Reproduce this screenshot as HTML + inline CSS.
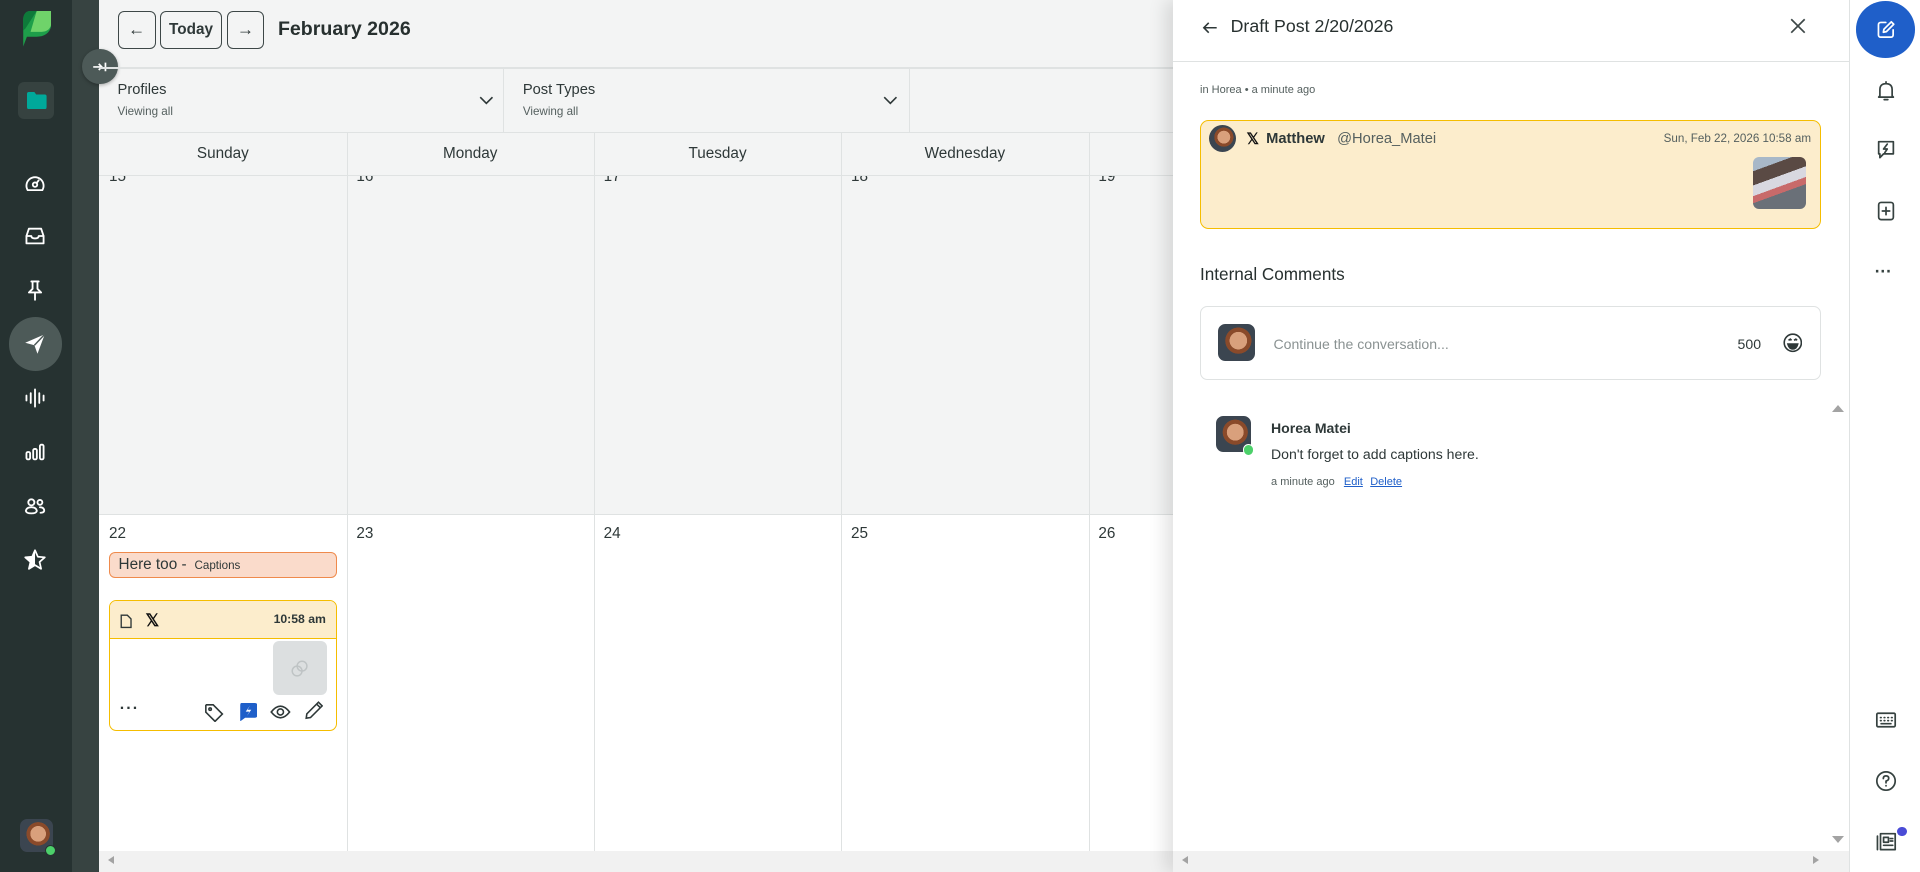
<!DOCTYPE html>
<html><head><meta charset="utf-8">
<style>
html{zoom:1.22449}
*{box-sizing:border-box;margin:0;padding:0}
body{width:1568px;height:712px;overflow:hidden;position:relative;font-family:"Liberation Sans",sans-serif;color:#2e3838;background:#f3f4f4}
.a{position:absolute}
.ic{position:absolute;width:18px;height:18px;fill:none;stroke:#fff;stroke-width:1.5;stroke-linecap:round;stroke-linejoin:round}
.btn{position:absolute;top:9px;height:31px;border:1px solid #3d4747;border-radius:5px;display:flex;align-items:center;justify-content:center;font-size:12.5px;font-weight:bold;color:#2e3838}
.col{position:absolute;top:108px;bottom:17px;border-left:1px solid #dfe2e2}
.day{position:absolute;top:108px;height:35px;line-height:36px;text-align:center;font-size:12.5px}
.num{position:absolute;font-size:12.5px}
.ri{position:absolute;left:1531px;width:18px;height:18px;fill:none;stroke:#364240;stroke-width:1.4;stroke-linecap:round;stroke-linejoin:round}
.av{position:absolute;border-radius:6px;background:radial-gradient(circle at 55% 45%,#d9a07c 0 30%,#8a4a2a 31% 45%,#3b4550 46% 100%)}
</style></head><body>
<!-- left sidebar -->
<div class="a" style="left:0;top:0;width:59px;height:712px;background:#263231"></div>
<div class="a" style="left:59px;top:0;width:22px;height:712px;background:#374341"></div>
<svg class="a" style="left:18px;top:9px" width="24" height="30" viewBox="0 0 24 30"><path d="M7 0H24V10C24 17 19 21 12 21H4L1 29V7C1 3 3 0 7 0Z" fill="#1e9e4a"/><path d="M12 0H24V9C24 14 21 17 16 17H7Z" fill="#6fd36a"/><path d="M1 7C1 3 3 0 7 0H12L3 14L1 16Z" fill="#0e7a3a"/></svg>
<div class="a" style="left:15px;top:67px;width:29px;height:30px;background:#364240;border-radius:5px"></div>
<svg class="a" style="left:22px;top:75px" width="16" height="14" viewBox="0 0 16 14"><path d="M0 1.5Q0 0 1.5 0H6L7.5 2H14.5Q16 2 16 3.5V12.5Q16 14 14.5 14H1.5Q0 14 0 12.5Z" fill="#00a99a"/></svg>
<svg class="ic" style="left:20px;top:141px" viewBox="0 0 18 18"><path d="M3 14A7 7 0 1 1 15 14Z"/><circle cx="9" cy="9.5" r="1.8"/><path d="M10.3 8.2L12 6"/></svg>
<svg class="ic" style="left:20px;top:184px" viewBox="0 0 18 18"><path d="M2 9L4 3H14L16 9V15H2Z"/><path d="M2 9H6Q6 11 9 11Q12 11 12 9H16"/></svg>
<svg class="ic" style="left:20px;top:228px" viewBox="0 0 18 18"><path d="M6 2H12M7 2V8L4 11H14L11 8V2M9 11V17"/></svg>
<div class="a" style="left:7px;top:259px;width:44px;height:44px;border-radius:50%;background:#4d5a58"></div>
<svg class="a" style="left:20px;top:272px" width="18" height="18" viewBox="0 0 18 18"><path d="M1 8L17 1L11 17L8.5 10Z" fill="#fff"/><path d="M8.5 10L17 1" stroke="#4d5a58" stroke-width="1.2"/></svg>
<svg class="ic" style="left:20px;top:316px" viewBox="0 0 18 18"><path d="M2 7V11M5.5 5V13M9 2V16M12.5 5V13M16 7V11"/></svg>
<svg class="ic" style="left:20px;top:360px" viewBox="0 0 18 18"><rect x="2" y="9" width="3" height="6" rx="1.2"/><rect x="7.5" y="6.5" width="3" height="8.5" rx="1.2"/><rect x="13" y="3" width="3" height="12" rx="1.2"/></svg>
<svg class="ic" style="left:20px;top:404px" viewBox="0 0 18 18"><circle cx="6" cy="6" r="2.5"/><circle cx="13" cy="6" r="2"/><path d="M1.5 13Q2 10 6 10Q10 10 10.5 13Q10 15 6 15Q2 15 1.5 13Z"/><path d="M13 10Q16.5 10 16.5 13Q16 14.5 13.5 14.5"/></svg>
<svg class="a" style="left:20px;top:448px" width="18" height="18" viewBox="0 0 18 18"><path d="M9 1L11.3 6.3L17 6.8L12.7 10.6L14 16.2L9 13.2L4 16.2L5.3 10.6L1 6.8L6.7 6.3Z" fill="none" stroke="#fff" stroke-width="1.4" stroke-linejoin="round"/><path d="M9 1L9 13.2L4 16.2L5.3 10.6L1 6.8L6.7 6.3Z" fill="#fff"/></svg>
<div class="av" style="left:16px;top:669px;width:27px;height:27px"></div>
<div class="a" style="left:37px;top:690px;width:9px;height:9px;border-radius:50%;background:#4cd06a;border:1.5px solid #263231"></div>
<!-- collapse button -->
<div class="a" style="left:67px;top:40px;width:29px;height:29px;border-radius:50%;background:#4d5a58;box-shadow:0 1px 3px rgba(0,0,0,.3)"></div>
<svg class="a" style="left:75px;top:48px" width="13" height="13" viewBox="0 0 13 13" fill="none" stroke="#fff" stroke-width="1.4"><path d="M1 6.5H8M5.5 4L8 6.5L5.5 9M11 3V10"/></svg>

<!-- main header -->
<div class="btn" style="left:96px;width:31px"><span style="font-weight:normal;font-size:14px">←</span></div>
<div class="btn" style="left:131px;width:50px">Today</div>
<div class="btn" style="left:185px;width:31px"><span style="font-weight:normal;font-size:14px">→</span></div>
<div class="a" style="left:227px;top:15px;font-size:16px;font-weight:bold;color:#27302f">February 2026</div>
<div class="a" style="left:81px;top:55px;width:877px;height:1px;background:#dfe2e2"></div>
<div class="a" style="left:96px;top:67px;font-size:12px">Profiles</div>
<div class="a" style="left:96px;top:86px;font-size:9.5px;color:#55605f">Viewing all</div>
<svg class="a" style="left:391px;top:78px" width="12" height="8" fill="none" stroke="#2e3838" stroke-width="1.3"><path d="M1 1L6 6L11 1"/></svg>
<div class="a" style="left:411px;top:56px;width:1px;height:52px;background:#dfe2e2"></div>
<div class="a" style="left:427px;top:67px;font-size:12px">Post Types</div>
<div class="a" style="left:427px;top:86px;font-size:9.5px;color:#55605f">Viewing all</div>
<svg class="a" style="left:721px;top:78px" width="12" height="8" fill="none" stroke="#2e3838" stroke-width="1.3"><path d="M1 1L6 6L11 1"/></svg>
<div class="a" style="left:742px;top:56px;width:1px;height:52px;background:#dfe2e2"></div>
<div class="a" style="left:81px;top:108px;width:877px;height:1px;background:#dfe2e2"></div>
<div class="a" style="left:81px;top:143px;width:877px;height:1px;background:#dfe2e2"></div>
<!-- week 2 white -->
<div class="a" style="left:81px;top:420px;width:877px;height:275px;background:#fff;border-top:1px solid #dfe2e2"></div>
<div class="col" style="left:283px"></div><div class="col" style="left:485px"></div><div class="col" style="left:687px"></div><div class="col" style="left:889px"></div>
<div class="day" style="left:81px;width:202px">Sunday</div>
<div class="day" style="left:283px;width:202px">Monday</div>
<div class="day" style="left:485px;width:202px">Tuesday</div>
<div class="day" style="left:687px;width:202px">Wednesday</div>
<div style="position:absolute;left:81px;top:144px;width:877px;height:8px;overflow:hidden">
<div class="num" style="left:8px;top:-7px">15</div><div class="num" style="left:210px;top:-7px">16</div><div class="num" style="left:412px;top:-7px">17</div><div class="num" style="left:614px;top:-7px">18</div><div class="num" style="left:816px;top:-7px">19</div></div>
<div class="num" style="left:89px;top:429px">22</div><div class="num" style="left:291px;top:429px">23</div><div class="num" style="left:493px;top:429px">24</div><div class="num" style="left:695px;top:429px">25</div><div class="num" style="left:897px;top:429px">26</div>
<div class="a" style="left:89px;top:451px;width:186px;height:21px;background:#fadbcb;border:1px solid #ef8a4c;border-radius:5px;padding-left:7px;line-height:19px;font-size:12.5px">Here too - <span style="font-size:9.5px;margin-left:3px">Captions</span></div>
<div class="a" style="left:89px;top:490px;width:186px;height:107px;border:1px solid #f5bd00;border-radius:6px;background:#fff;overflow:hidden">
 <div style="height:31px;background:#fcedcc;border-bottom:1px solid #f5bd00;position:relative">
  <svg class="a" style="left:8px;top:11px" width="10" height="12" fill="none" stroke="#2e3838" stroke-width="1.1"><path d="M1 1H6L9 4V11H1Z"/></svg>
  <div class="a" style="left:29px;top:7px;font-size:14px;font-weight:bold;color:#111">𝕏</div>
  <div class="a" style="right:8px;top:9px;font-size:10px;font-weight:bold">10:58 am</div>
 </div>
 <div class="a" style="left:133px;top:33px;width:44px;height:44px;background:#dcdfe0;border-radius:5px"></div>
 <svg class="a" style="left:148px;top:48px" width="14" height="14" fill="none" stroke="#bfc4c5" stroke-width="1.2"><circle cx="5" cy="9" r="4"/><circle cx="9" cy="5" r="4"/></svg>
 <div class="a" style="left:8px;top:81px;font-size:13px;font-weight:bold;letter-spacing:1px">···</div>
 <svg class="a" style="left:77px;top:83px" width="16" height="16" fill="none" stroke="#2e3838" stroke-width="1.3"><path d="M1.5 2V7.5L9 15L15 9L7.5 1.5H2Z"/><circle cx="5" cy="5" r="1"/></svg>
 <svg class="a" style="left:105px;top:83px" width="15" height="15"><path d="M2 0H13Q15 0 15 2V10Q15 12 13 12H5L1 15V2Q1 0 2 0Z" fill="#1f5fc9"/><path d="M9 2L5.5 7H8.5L6.5 10.5L10 5.5H7Z" fill="#fff"/></svg>
 <svg class="a" style="left:131px;top:84px" width="17" height="13" fill="none" stroke="#2e3838" stroke-width="1.3"><path d="M1 6.5Q8.5 -3 16 6.5Q8.5 16 1 6.5Z"/><circle cx="8.5" cy="6.5" r="2.5"/></svg>
 <svg class="a" style="left:159px;top:82px" width="15" height="15" fill="none" stroke="#2e3838" stroke-width="1.3"><path d="M1 14L1.5 10.5L11 1L14 4L4.5 13.5Z M9.5 2.5L12.5 5.5"/></svg>
</div>
<!-- bottom scrollbar -->
<div class="a" style="left:81px;top:695px;width:877px;height:17px;background:#f1f1f1"></div>
<div class="a" style="left:88px;top:699px;width:0;height:0;border-top:4px solid transparent;border-bottom:4px solid transparent;border-right:5px solid #a3a3a3"></div>

<!-- side panel -->
<div class="a" style="left:958px;top:0;width:552px;height:712px;background:#fff;box-shadow:-6px 0 14px rgba(0,0,0,.12)"></div>
<svg class="a" style="left:982px;top:17px" width="13" height="11" fill="none" stroke="#2e3838" stroke-width="1.3"><path d="M12 5.5H1.5M5.5 1.5L1.5 5.5L5.5 9.5"/></svg>
<div class="a" style="left:1005px;top:13px;font-size:14.5px;color:#27302f">Draft Post 2/20/2026</div>
<svg class="a" style="left:1462px;top:15px" width="13" height="13" stroke="#3d4747" stroke-width="1.4"><path d="M1 1L12 12M12 1L1 12"/></svg>
<div class="a" style="left:958px;top:50px;width:552px;height:1px;background:#dfe2e2"></div>
<div class="a" style="left:980px;top:69px;font-size:9px;color:#55605f">in Horea • a minute ago</div>
<div class="a" style="left:980px;top:98px;width:507px;height:89px;background:#fcedcc;border:1px solid #f5bd00;border-radius:7px"></div>
<div class="av" style="left:987px;top:102px;width:22px;height:22px;border-radius:50%"></div>
<div class="a" style="left:1018px;top:106px;font-size:12.5px;font-weight:bold;color:#111">𝕏</div>
<div class="a" style="left:1034px;top:107px;font-size:12px;font-weight:bold">Matthew</div>
<div class="a" style="left:1092px;top:107px;font-size:12px;color:#55605f">@Horea_Matei</div>
<div class="a" style="left:1300px;top:108px;width:179px;text-align:right;font-size:9.5px;color:#55605f">Sun, Feb 22, 2026 10:58 am</div>
<div class="a" style="left:1432px;top:128px;width:43px;height:43px;border-radius:5px;background:linear-gradient(160deg,#a8b8c8 0 20%,#5a4a44 20% 40%,#d8d8e0 40% 55%,#c86a6a 55% 65%,#6a7078 65% 100%)"></div>
<div class="a" style="left:980px;top:216px;font-size:14px;color:#27302f">Internal Comments</div>
<div class="a" style="left:980px;top:250px;width:507px;height:60px;border:1px solid #dfe2e2;border-radius:6px"></div>
<div class="av" style="left:995px;top:265px;width:30px;height:30px"></div>
<div class="a" style="left:1040px;top:274px;font-size:11.5px;color:#8a9292">Continue the conversation...</div>
<div class="a" style="left:1419px;top:274px;font-size:11.5px">500</div>
<svg class="a" style="left:1456px;top:272px" width="16" height="16" fill="none" stroke="#2e3838" stroke-width="1.3"><circle cx="8" cy="8" r="7"/><path d="M4 9H12Q11 13 8 13Q5 13 4 9Z" fill="#2e3838"/><path d="M4.5 6L6 5L7 6M9 6L10.5 5L11.5 6"/></svg>
<div class="av" style="left:993px;top:340px;width:29px;height:29px"></div>
<div class="a" style="left:1015px;top:363px;width:9px;height:9px;border-radius:50%;background:#4cd06a;border:1.5px solid #fff"></div>
<div class="a" style="left:1038px;top:343px;font-size:11.5px;font-weight:bold">Horea Matei</div>
<div class="a" style="left:1038px;top:364px;font-size:11.5px">Don't forget to add captions here.</div>
<div class="a" style="left:1038px;top:389px;font-size:9px;color:#55605f">a minute ago <span style="color:#1f5fc9;text-decoration:underline;margin-left:5px">Edit</span><span style="color:#1f5fc9;text-decoration:underline;margin-left:6px">Delete</span></div>
<div class="a" style="left:1496px;top:331px;width:0;height:0;border-left:5px solid transparent;border-right:5px solid transparent;border-bottom:6px solid #a3a3a3"></div>
<div class="a" style="left:1496px;top:683px;width:0;height:0;border-left:5px solid transparent;border-right:5px solid transparent;border-top:6px solid #a3a3a3"></div>
<div class="a" style="left:958px;top:695px;width:552px;height:17px;background:#f1f1f1"></div>
<div class="a" style="left:965px;top:699px;width:0;height:0;border-top:4px solid transparent;border-bottom:4px solid transparent;border-right:5px solid #a3a3a3"></div>
<div class="a" style="left:1481px;top:699px;width:0;height:0;border-top:4px solid transparent;border-bottom:4px solid transparent;border-left:5px solid #a3a3a3"></div>

<!-- right sidebar -->
<div class="a" style="left:1510px;top:0;width:58px;height:712px;background:#fff;border-left:1px solid #dfe2e2"></div>
<div class="a" style="left:1516px;top:1px;width:48px;height:46px;border-radius:50%;background:#1f5fc9"></div>
<svg class="a" style="left:1532px;top:16px" width="16" height="16" fill="none" stroke="#fff" stroke-width="1.4" stroke-linecap="round" stroke-linejoin="round"><path d="M8 2H4Q2 2 2 4V12Q2 14 4 14H12Q14 14 14 12V8"/><path d="M6 10L6.5 7.5L12.5 1.5L14.5 3.5L8.5 9.5Z"/></svg>
<svg class="ri" style="top:65px" viewBox="0 0 18 18"><path d="M4 13V8Q4 3 9 3Q14 3 14 8V13L15 14H3Z M7.5 16H10.5 M9 1.5V3"/></svg>
<svg class="ri" style="top:113px" viewBox="0 0 18 18"><path d="M3 3H15V13H7L4 16V13H3Z"/><path d="M10 5L7 9H10L8 12"/></svg>
<svg class="ri" style="top:163px" viewBox="0 0 18 18"><rect x="3" y="2" width="12" height="14" rx="2"/><path d="M9 6V12M6 9H12"/></svg>
<div class="a" style="left:1531px;top:213px;font-size:14px;font-weight:bold;color:#364240">···</div>
<svg class="ri" style="top:579px" viewBox="0 0 18 18"><rect x="1.5" y="3.5" width="15" height="11" rx="1"/><path d="M4.5 7H5M7.5 7H8M10.5 7H11M13.5 7H14M4.5 9.5H5M7.5 9.5H8M10.5 9.5H11M13.5 9.5H14M5 12H13"/></svg>
<svg class="ri" style="top:629px" viewBox="0 0 18 18"><circle cx="9" cy="9" r="7.5"/><path d="M6.8 7Q6.8 4.8 9 4.8Q11.2 4.8 11.2 6.8Q11.2 8.3 9 9V10.5M9 12.8V13"/></svg>
<svg class="ri" style="top:678px" viewBox="0 0 18 18"><path d="M2 5V16M4.5 3H16.5V16H4.5Z M7 6H11V10H7Z M12.5 7H14.5M12.5 9H14.5M7 12.5H14.5"/></svg>
<div class="a" style="left:1549px;top:675px;width:8px;height:8px;border-radius:50%;background:#4a4cd6"></div>
</body></html>
